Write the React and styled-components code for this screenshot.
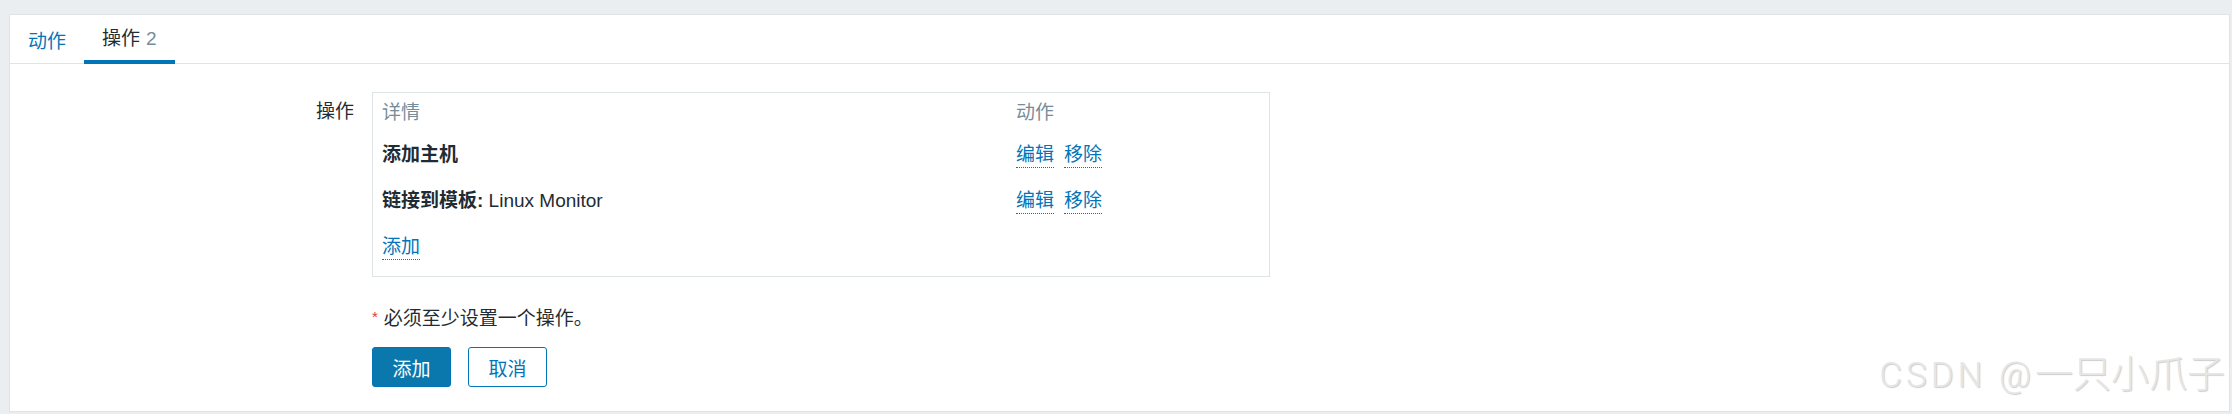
import React from 'react'
import styled, { createGlobalStyle } from 'styled-components'

const GlobalStyle = createGlobalStyle`
  body {
    margin: 0;
    background-color: #ebeef0;
    font-family: "Liberation Sans", Arial, "Noto Sans CJK SC", sans-serif;
    color: #1f2c33;
  }
`

const Page = styled.div`
  padding: 14px 2px 3px 9px;
`

const Panel = styled.div`
  position: relative;
  background-color: #fff;
  border: 1px solid #dfe4e7;
  height: 398px;
  box-sizing: border-box;
  overflow: hidden;
`

const TabBar = styled.div`
  display: flex;
  height: 49px;
  border-bottom: 1px solid #dfe4e7;
  box-sizing: border-box;
`

const Tab = styled.div`
  display: flex;
  align-items: center;
  padding: 3px 18px 0;
  font-size: 19px;
  color: ${p => (p.active ? '#1f2c33' : '#0275b8')};
  border-bottom: 4px solid ${p => (p.active ? '#0275b8' : 'transparent')};
  margin-bottom: -1px;
`

const TabText = styled.span`
  line-height: 26px;
`

const Count = styled.span`
  color: #768d99;
  margin-left: 6px;
`

const Form = styled.div`
  display: grid;
  grid-template-columns: 344px 898px;
  column-gap: 18px;
  padding-top: 28px;
`

const Label = styled.div`
  text-align: right;
  font-size: 19px;
  line-height: 26px;
  padding-top: 7px;
`

const Box = styled.div`
  border: 1px solid #dfe4e7;
  padding: 7px 10px 16px 9px;
  height: 185px;
  box-sizing: border-box;
`

const Row = styled.div`
  display: grid;
  grid-template-columns: 634px 1fr;
  font-size: 19px;
  line-height: 26px;
  margin-bottom: ${p => p.gap || 20}px;
`

const Head = styled.div`
  color: #768d99;
`

const Detail = styled.div`
  b {
    font-weight: bold;
  }
`

const Actions = styled.div`
  display: flex;
  gap: 10px;
`

const Link = styled.span`
  color: #0275b8;
  display: inline-block;
  line-height: 25px;
  border-bottom: 1px dotted #0275b8;
`

const AddRow = styled.div`
  font-size: 19px;
  margin-top: 2px;
`

const Empty = styled.div``

const Note = styled.div`
  font-size: 19px;
  line-height: 26px;
  margin-top: 27px;
`

const Star = styled.span`
  color: #e33734;
  margin-right: 6px;
  font-size: 15px;
  vertical-align: 3px;
`

const Buttons = styled.div`
  display: flex;
  gap: 17px;
  margin-top: 15px;
`

const Button = styled.button`
  width: 79px;
  height: 40px;
  font-family: inherit;
  font-size: 19px;
  border-radius: 3px;
  border: 1px solid #0275b8;
  background-color: ${p => (p.primary ? '#0b78ad' : '#fff')};
  color: ${p => (p.primary ? '#fff' : '#0275b8')};
  cursor: pointer;
  padding: 0;
`

const Watermark = styled.div`
  position: absolute;
  right: 4px;
  bottom: 13px;
  display: flex;
  align-items: baseline;
  color: #e6e6e6;
  text-shadow: 1px 1px 1px rgba(0, 0, 0, 0.2);
  font-family: Roboto, "Noto Sans CJK SC", sans-serif;
  font-weight: 300;
  white-space: nowrap;
`

const MarkLatin = styled.span`
  font-size: 35px;
  letter-spacing: 4px;
`

const MarkCjk = styled.span`
  font-family: "Noto Sans CJK SC", sans-serif;
  font-size: 38px;
  font-weight: 300;
`

function App() {
  const ops = [
    { id: 1, content: <b>添加主机</b> },
    { id: 2, content: <><b>链接到模板:</b> Linux Monitor</> },
  ]

  return (
    <>
      <GlobalStyle />
      <Page>
        <Panel>
          <TabBar>
            <Tab>动作</Tab>
            <Tab active><TabText>操作<Count>2</Count></TabText></Tab>
          </TabBar>
          <Form>
            <Label>操作</Label>
            <Box>
              <Row gap={16}>
                <Head>详情</Head>
                <Head>动作</Head>
              </Row>
              {ops.map(op => (
                <Row key={op.id}>
                  <Detail>{op.content}</Detail>
                  <Actions>
                    <Link>编辑</Link>
                    <Link>移除</Link>
                  </Actions>
                </Row>
              ))}
              <AddRow><Link>添加</Link></AddRow>
            </Box>
            <Empty />
            <div>
              <Note><Star>*</Star>必须至少设置一个操作。</Note>
              <Buttons>
                <Button primary>添加</Button>
                <Button>取消</Button>
              </Buttons>
            </div>
          </Form>
          <Watermark>
            <MarkLatin>CSDN @</MarkLatin>
            <MarkCjk>一只小爪子</MarkCjk>
          </Watermark>
        </Panel>
      </Page>
    </>
  )
}

export default App
